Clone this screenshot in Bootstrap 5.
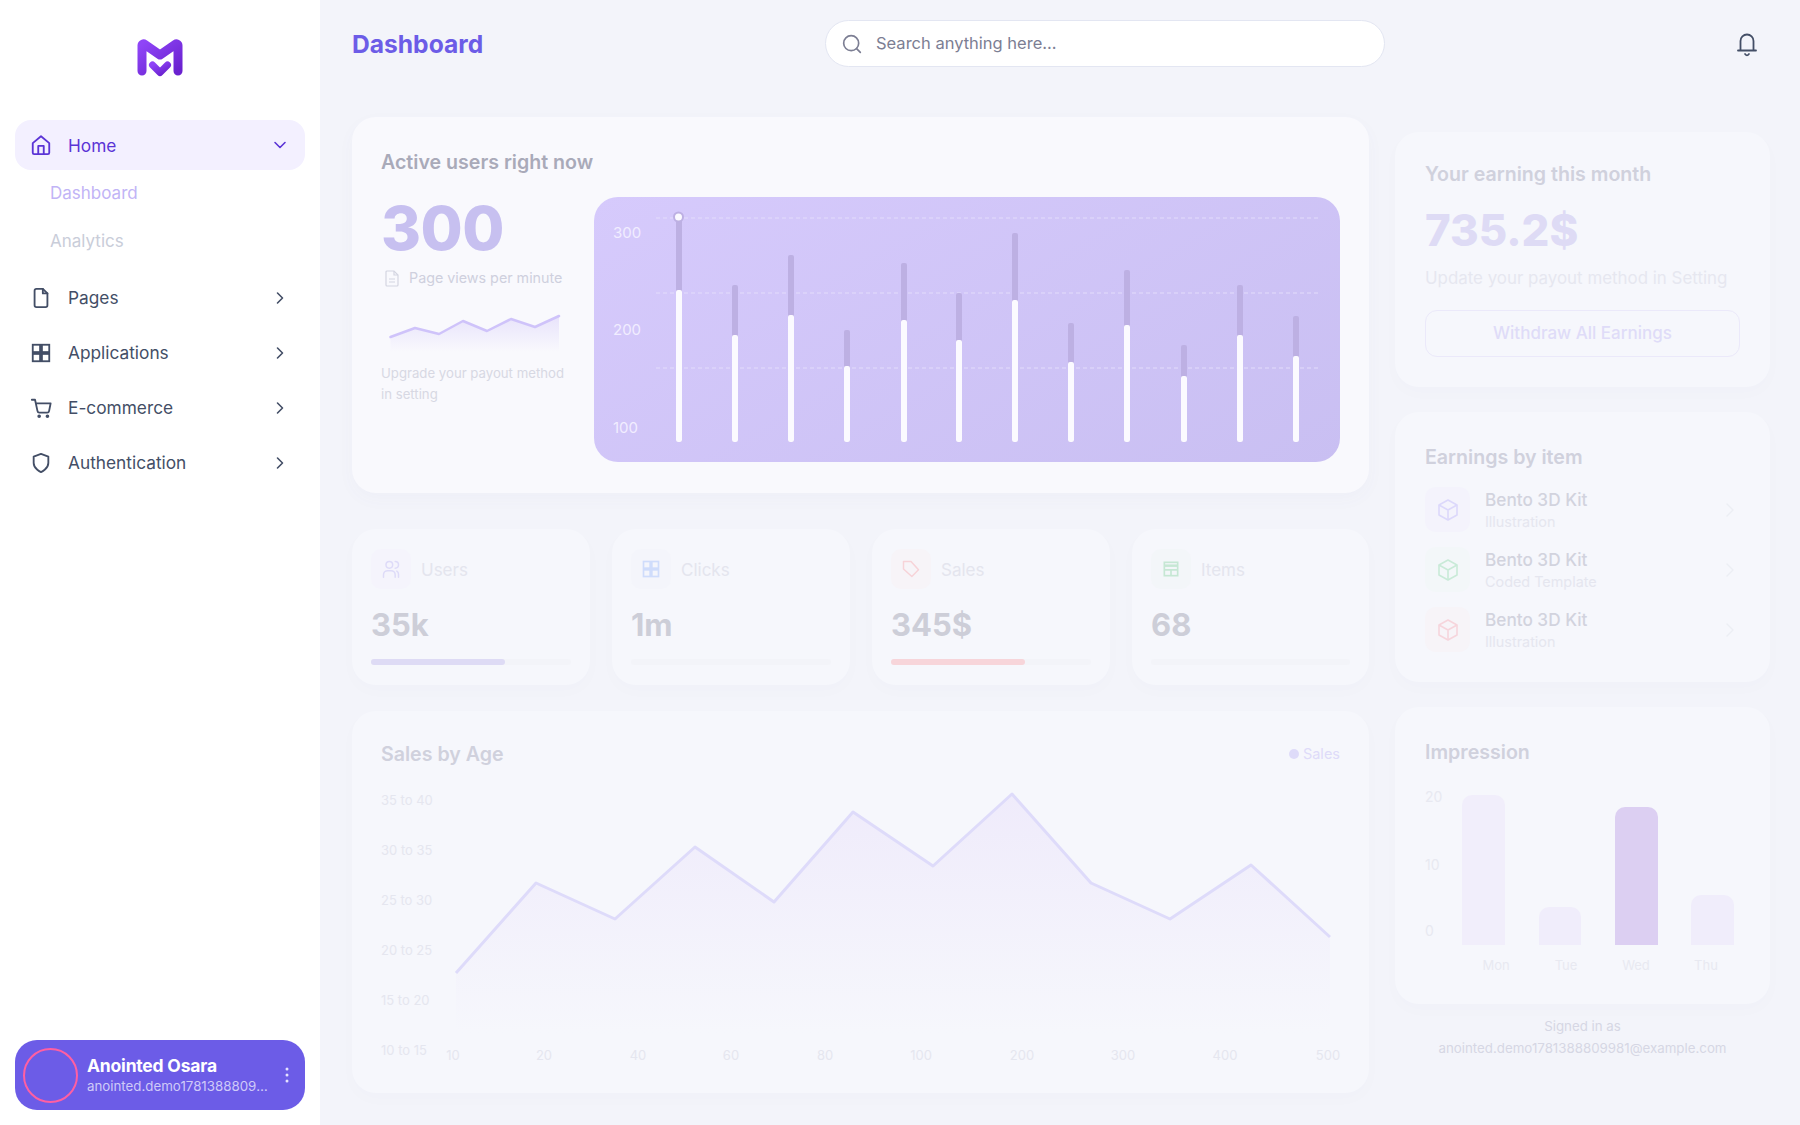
<!DOCTYPE html>
<html lang="en">

<head>
    <meta charset="UTF-8">
    <meta name="viewport" content="width=device-width, initial-scale=1.0">
    <title>Dashboard</title>
    <link href="https://cdn.jsdelivr.net/npm/bootstrap@5.3.0/dist/css/bootstrap.min.css" rel="stylesheet">
    <style>
        body {
            background-color: #f3f4fa;
            font-family: Inter, "Liberation Sans", sans-serif;
            color: #3f4a60;
        }

        svg text {
            font-family: Inter, "Liberation Sans", sans-serif;
        }

        .side-bar {
            width: 320px;
            height: 1125px;
            padding: 39px 15px 15px;
            flex-shrink: 0;
        }

        .side-logo {
            margin-bottom: 43px;
        }

        .side-link {
            height: 55px;
            padding: 0 18px 0 15px;
            font-size: 17.3px;
            color: #434e66;
            border-radius: 16px;
        }

        .side-link span {
            padding-top: 1px;
        }

        .side-link.is-open {
            height: 50px;
            background-color: #f3f0ff;
            color: #5b34d6;
        }

        .side-link svg.lead-icon {
            width: 22px;
            height: 22px;
            margin-right: 16px;
            flex-shrink: 0;
        }

        .side-sub {
            height: 48px;
            padding-left: 35px;
            font-size: 17px;
            color: #c9cdd9;
        }

        .side-sub.is-current {
            color: #c1b4f6;
        }

        .user-box {
            height: 70px;
            padding: 0 16px 0 8px;
            background-color: #6c5ce7;
            border-radius: 22px;
            color: #fff;
        }

        .user-ring {
            width: 55px;
            height: 55px;
            border: 2px solid #ff5fa2;
            border-radius: 50%;
            flex-shrink: 0;
            margin-right: 9px;
        }

        .user-name {
            font-size: 17.5px;
            font-weight: 700;
            line-height: 21px;
            letter-spacing: -.2px;
        }

        .user-mail {
            font-size: 13.3px;
            line-height: 20px;
            color: #cfcaf8;
            width: 181px;
        }

        .page-main {
            padding: 20px 30px 0 32px;
            width: 1480px;
        }

        .top-title {
            width: 473px;
            font-size: 24.6px;
            line-height: 34px;
            padding-top: 1px;
            font-weight: 700;
            color: #6c5ce7;
            margin: 0;
        }

        .search-box {
            width: 560px;
            height: 47px;
            padding: 0 16px;
            background-color: #fff;
            border: 1px solid #e3e6f2;
            border-radius: 24px;
        }

        .search-box input {
            border: 0;
            outline: 0;
            width: 100%;
            padding-top: 1px;
            font-size: 16.5px;
            font-family: inherit;
            background: transparent;
        }

        .search-box input::placeholder {
            color: #7c7e93;
            opacity: 1;
        }

        .bell-icon {
            margin-right: 11px;
        }

        .main-grid {
            display: grid;
            grid-template-columns: 1017px 375px;
            column-gap: 26px;
            margin-top: 50px;
        }

        .tile-card {
            background-color: #f6f7fc;
            border-radius: 24px;
            box-shadow: 0 6px 18px rgba(90, 90, 150, .015);
        }

        .active-card {
            height: 376px;
            padding: 32px 29px;
            background-color: #f9f9fd;
            box-shadow: 0 6px 18px rgba(90, 90, 150, .03);
            margin-bottom: 36px;
        }

        .card-head {
            font-size: 19.6px;
            line-height: 26px;
            font-weight: 600;
            margin: 0;
            color: #d0d1dd;
        }

        .active-card .card-head {
            color: #a9aab9;
            margin-bottom: 22px;
        }

        .big-count {
            font-size: 61px;
            line-height: 62px;
            font-weight: 800;
            color: #c7c0f0;
            letter-spacing: -.5px;
        }

        .views-note {
            margin-top: 8px;
            height: 22px;
            font-size: 14.3px;
            color: #cfd0de;
        }

        .views-note span {
            margin-left: 2px;
        }

        .spark-line {
            display: block;
            margin-top: 22px;
        }

        .upgrade-note {
            width: 190px;
            margin-top: 8px;
            font-size: 13.2px;
            line-height: 21px;
            color: #d7d8e3;
        }

        .users-chart {
            width: 746px;
            height: 265px;
            border-radius: 24px;
            flex-shrink: 0;
            margin-left: auto;
            background: linear-gradient(150deg, #d6cafc, #c9bff2);
            display: block;
        }

        .stat-row {
            display: grid;
            grid-template-columns: 238px 238px 238px 237px;
            column-gap: 22px;
            margin-bottom: 26px;
        }

        .stat-card {
            height: 156px;
            padding: 20px 19px;
        }

        .stat-icon {
            width: 40px;
            height: 40px;
            border-radius: 10px;
            margin-right: 10px;
        }

        .stat-label {
            font-size: 17px;
            padding-top: 4px;
            color: #e4e5ee;
        }

        .stat-num {
            font-size: 31px;
            line-height: 38px;
            font-weight: 700;
            color: #cdced8;
            margin-top: 17px;
            margin-bottom: 15px;
        }

        .stat-track {
            height: 6px;
            background-color: #f3f4f9;
            border-radius: 3px;
        }

        .sales-card {
            height: 382px;
            padding: 30px 29px;
        }

        .sales-card svg {
            display: block;
            margin-top: 23px;
        }

        .legend-note {
            font-size: 14.5px;
            color: #dedbf9;
        }

        .legend-dot {
            width: 10px;
            height: 10px;
            border-radius: 50%;
            background-color: #dedbf9;
            margin-right: 4px;
        }

        .right-col {
            padding-top: 15px;
        }

        .earn-card {
            height: 255px;
            padding: 29px 30px;
            margin-bottom: 25px;
        }

        .earn-sum {
            font-size: 43.7px;
            line-height: 56px;
            font-weight: 800;
            color: #dedbf5;
            margin-top: 16px;
        }

        .earn-note {
            font-size: 16.9px;
            line-height: 24px;
            color: #e6e7f0;
            margin-top: 7px;
            white-space: nowrap;
        }

        .earn-btn {
            display: block;
            width: 315px;
            height: 47px;
            margin-top: 20px;
            font-size: 17px;
            font-weight: 500;
            color: #dfdcf8;
            background: transparent;
            border: 1px solid #ebe9fa;
            border-radius: 12px;
        }

        .items-card {
            height: 270px;
            padding: 32px 30px;
            margin-bottom: 25px;
        }

        .item-row {
            height: 45px;
            margin-top: 15px;
        }

        .items-card .card-head {
            margin-bottom: 17px;
        }

        .item-pic {
            width: 45px;
            height: 45px;
            border-radius: 11px;
            margin-right: 15px;
        }

        .item-name {
            font-size: 17.2px;
            line-height: 22px;
            padding-top: 1px;
            font-weight: 500;
            color: #d2d3de;
        }

        .item-kind {
            font-size: 14.4px;
            line-height: 20px;
            margin-top: 1px;
            color: #e5e6ef;
        }

        .impr-card {
            height: 297px;
            padding: 32px 30px;
        }

        .impr-card svg {
            display: block;
            margin-top: 20px;
        }

        .signed-note {
            margin-top: 11px;
            font-size: 13.3px;
            line-height: 22px;
            color: #d6d7e4;
        }
    </style>
</head>

<body>
    <div class="d-flex">

        <aside class="side-bar bg-white d-flex flex-column">
            <div class="side-logo text-center">
                <svg width="46" height="38" viewBox="0 0 46 38" fill="none">
                    <defs>
                        <linearGradient id="logoFill" x1="0" y1="0" x2="1" y2="1">
                            <stop offset="0" stop-color="#8f45f7" />
                            <stop offset="1" stop-color="#6a22cf" />
                        </linearGradient>
                    </defs>
                    <path d="M5 32V6.5C5 5 6.5 4.5 7.5 5.2L23 16L38.5 5.2C39.5 4.5 41 5 41 6.5V32" stroke="url(#logoFill)" stroke-width="9" stroke-linecap="round" stroke-linejoin="round" />
                    <path d="M15.5 26L23 33.5L30.5 26" stroke="url(#logoFill)" stroke-width="7" stroke-linecap="round" stroke-linejoin="round" />
                </svg>
            </div>

            <nav class="nav flex-column">
                <a class="side-link is-open d-flex align-items-center text-decoration-none" href="#">
                    <svg class="lead-icon" viewBox="0 0 24 24" fill="none" stroke="currentColor" stroke-width="2" stroke-linecap="round" stroke-linejoin="round"><path d="M3 10l9-7.500 9 7.500v10.500a1.500 1.500 0 0 1-1.500 1.500H4.500A1.500 1.500 0 0 1 3 20.500z" /><path d="M9 22v-9h6v9" /></svg>
                    <span class="flex-grow-1">Home</span>
                    <svg width="14" height="14" viewBox="0 0 14 14" fill="none" stroke="currentColor" stroke-width="1.600" stroke-linecap="round" stroke-linejoin="round"><path d="M2 4.500l5 5 5-5" /></svg>
                </a>
                <a class="side-sub is-current d-flex align-items-center text-decoration-none" href="#">Dashboard</a>
                <a class="side-sub d-flex align-items-center text-decoration-none" href="#">Analytics</a>
                <a class="side-link d-flex align-items-center text-decoration-none mt-1" href="#">
                    <svg class="lead-icon" viewBox="0 0 24 24" fill="none" stroke="currentColor" stroke-width="2" stroke-linecap="round" stroke-linejoin="round"><path d="M14 2H7a2 2 0 0 0-2 2v16a2 2 0 0 0 2 2h10a2 2 0 0 0 2-2V7z" /><path d="M14 2v5h5" /></svg>
                    <span class="flex-grow-1">Pages</span>
                    <svg width="14" height="14" viewBox="0 0 14 14" fill="none" stroke="currentColor" stroke-width="1.600" stroke-linecap="round" stroke-linejoin="round"><path d="M4.500 2l5 5-5 5" /></svg>
                </a>
                <a class="side-link d-flex align-items-center text-decoration-none" href="#">
                    <svg class="lead-icon" viewBox="0 0 24 24" fill="none" stroke="currentColor" stroke-width="2"><rect x="3" y="3" width="8" height="8" /><rect x="13" y="3" width="8" height="8" /><rect x="3" y="13" width="8" height="8" /><rect x="13" y="13" width="8" height="8" /></svg>
                    <span class="flex-grow-1">Applications</span>
                    <svg width="14" height="14" viewBox="0 0 14 14" fill="none" stroke="currentColor" stroke-width="1.600" stroke-linecap="round" stroke-linejoin="round"><path d="M4.500 2l5 5-5 5" /></svg>
                </a>
                <a class="side-link d-flex align-items-center text-decoration-none" href="#">
                    <svg class="lead-icon" viewBox="0 0 24 24" fill="none" stroke="currentColor" stroke-width="2" stroke-linecap="round" stroke-linejoin="round"><circle cx="10" cy="21" r="1" /><circle cx="19" cy="21" r="1" /><path d="M2 3h3.500l2.700 12.400a2 2 0 0 0 2 1.600h8.600a2 2 0 0 0 2-1.600L22.500 7H6.500" /></svg>
                    <span class="flex-grow-1">E-commerce</span>
                    <svg width="14" height="14" viewBox="0 0 14 14" fill="none" stroke="currentColor" stroke-width="1.600" stroke-linecap="round" stroke-linejoin="round"><path d="M4.500 2l5 5-5 5" /></svg>
                </a>
                <a class="side-link d-flex align-items-center text-decoration-none" href="#">
                    <svg class="lead-icon" viewBox="0 0 24 24" fill="none" stroke="currentColor" stroke-width="2" stroke-linecap="round" stroke-linejoin="round"><path d="M12 22s8-3.500 8-10V5l-8-3-8 3v7c0 6.500 8 10 8 10z" /></svg>
                    <span class="flex-grow-1">Authentication</span>
                    <svg width="14" height="14" viewBox="0 0 14 14" fill="none" stroke="currentColor" stroke-width="1.600" stroke-linecap="round" stroke-linejoin="round"><path d="M4.500 2l5 5-5 5" /></svg>
                </a>
            </nav>

            <div class="user-box d-flex align-items-center mt-auto">
                <div class="user-ring"></div>
                <div class="flex-grow-1">
                    <div class="user-name">Anointed Osara</div>
                    <div class="user-mail text-truncate">anointed.demo1781388809981@example.com</div>
                </div>
                <svg width="4" height="16" viewBox="0 0 4 16" fill="#e6e2ff"><circle cx="2" cy="2" r="1.500" /><circle cx="2" cy="8" r="1.500" /><circle cx="2" cy="14" r="1.500" /></svg>
            </div>
        </aside>

        <main class="page-main">
            <header class="d-flex align-items-center">
                <h1 class="top-title">Dashboard</h1>
                <div class="search-box d-flex align-items-center gap-2">
                    <svg width="20" height="20" viewBox="0 0 24 24" fill="none" stroke="#7c7e93" stroke-width="2" stroke-linecap="round" class="flex-shrink-0 me-1"><circle cx="11" cy="11" r="9" /><path d="M22 22l-4.500-4.500" /></svg>
                    <input type="text" placeholder="Search anything here...">
                </div>
                <svg class="bell-icon ms-auto" width="24" height="26" viewBox="0 0 24 26" fill="none" stroke="#434e66" stroke-width="1.800" stroke-linecap="round" stroke-linejoin="round"><path d="M5.500 19V10a6.500 6.500 0 0 1 13 0v9" /><path d="M3 19.500h18" /><path d="M10 23a2.200 2.200 0 0 0 4 0" /></svg>
            </header>

            <div class="main-grid">
                <div>
                    <section class="tile-card active-card">
                        <h2 class="card-head">Active users right now</h2>
                        <div class="d-flex">
                            <div>
                                <div class="big-count">300</div>
                                <div class="views-note d-flex align-items-center">
                                    <svg class="me-2 ms-1" width="14" height="17" viewBox="0 0 14 17" fill="none" stroke="#d4d5e1" stroke-width="1.200"><path d="M9 1H2a1 1 0 0 0-1 1v13a1 1 0 0 0 1 1h10a1 1 0 0 0 1-1V5z" /><path d="M9 1v4h4M4 9h6M4 12h6" /></svg>
                                    <span>Page views per minute</span>
                                </div>
                                <svg class="spark-line" width="184" height="44" viewBox="381 312 184 44">
                                    <defs>
                                        <linearGradient id="sparkFill" x1="0" y1="0" x2="0" y2="1">
                                            <stop offset="0" stop-color="#e8e3fb" />
                                            <stop offset="1" stop-color="#f9f9fd" />
                                        </linearGradient>
                                    </defs>
                                    <path d="M390.500 338L415 329L439 335L463 322L487 332L511 320L535 328L559 317V353H390.500Z" fill="url(#sparkFill)" />
                                    <path d="M390.500 338L415 329L439 335L463 322L487 332L511 320L535 328L559 317" fill="none" stroke="#cfc3fa" stroke-width="2.500" stroke-linecap="round" stroke-linejoin="round" />
                                </svg>
                                <div class="upgrade-note">Upgrade your payout method in setting</div>
                            </div>
                            <svg class="users-chart" viewBox="594 197 746 265">
                                <g stroke="#e3dcfb" stroke-width="1" stroke-dasharray="4 3">
                                    <path d="M656 218H1320M656 293H1320M656 368H1320" />
                                </g>
                                <g fill="#f1edff" font-size="15">
                                    <text x="613" y="238">300</text>
                                    <text x="613" y="335">200</text>
                                    <text x="613" y="433">100</text>
                                </g>
                                <g fill="#bdb0e3">
                                    <rect x="676" y="218" width="6" height="224" rx="2" />
                                    <rect x="732" y="285" width="6" height="157" rx="2" />
                                    <rect x="788" y="255" width="6" height="187" rx="2" />
                                    <rect x="844" y="330" width="6" height="112" rx="2" />
                                    <rect x="901" y="263" width="6" height="179" rx="2" />
                                    <rect x="956" y="293" width="6" height="149" rx="2" />
                                    <rect x="1012" y="233" width="6" height="209" rx="2" />
                                    <rect x="1068" y="323" width="6" height="119" rx="2" />
                                    <rect x="1124" y="270" width="6" height="172" rx="2" />
                                    <rect x="1181" y="345" width="6" height="97" rx="2" />
                                    <rect x="1237" y="285" width="6" height="157" rx="2" />
                                    <rect x="1293" y="316" width="6" height="126" rx="2" />
                                </g>
                                <g fill="#fbfaff">
                                    <rect x="676" y="290" width="6" height="152" rx="2" />
                                    <rect x="732" y="335" width="6" height="107" rx="2" />
                                    <rect x="788" y="315" width="6" height="127" rx="2" />
                                    <rect x="844" y="366" width="6" height="76" rx="2" />
                                    <rect x="901" y="320" width="6" height="122" rx="2" />
                                    <rect x="956" y="340" width="6" height="102" rx="2" />
                                    <rect x="1012" y="300" width="6" height="142" rx="2" />
                                    <rect x="1068" y="362" width="6" height="80" rx="2" />
                                    <rect x="1124" y="325" width="6" height="117" rx="2" />
                                    <rect x="1181" y="376" width="6" height="66" rx="2" />
                                    <rect x="1237" y="335" width="6" height="107" rx="2" />
                                    <rect x="1293" y="356" width="6" height="86" rx="2" />
                                </g>
                                <circle cx="678.500" cy="217" r="4.500" fill="#fbfaff" stroke="#bdb0e3" stroke-width="2" />
                            </svg>
                        </div>
                    </section>

                    <div class="stat-row">
                        <section class="tile-card stat-card">
                            <div class="d-flex align-items-center">
                                <div class="stat-icon d-flex align-items-center justify-content-center" style="background-color: #f5f4fc">
                                    <svg width="20" height="20" viewBox="0 0 24 24" fill="none" stroke="#dedbf8" stroke-width="1.800" stroke-linecap="round"><circle cx="10" cy="7" r="4" /><path d="M3 22v-3a5 5 0 0 1 5-5h4a5 5 0 0 1 5 5v3M17 3a4 4 0 0 1 0 8M21 22v-4a4 4 0 0 0-2-3.500" /></svg>
                                </div>
                                <span class="stat-label">Users</span>
                            </div>
                            <div class="stat-num">35k</div>
                            <div class="stat-track">
                                <div class="h-100 rounded-1" style="width: 67%; background-color: #dedbf5"></div>
                            </div>
                        </section>
                        <section class="tile-card stat-card">
                            <div class="d-flex align-items-center">
                                <div class="stat-icon d-flex align-items-center justify-content-center" style="background-color: #f4f5fb">
                                    <svg width="20" height="20" viewBox="0 0 24 24" fill="none" stroke="#cfdcfb" stroke-width="2"><rect x="3" y="3" width="8" height="8" /><rect x="13" y="3" width="8" height="8" /><rect x="3" y="13" width="8" height="8" /><rect x="13" y="13" width="8" height="8" /></svg>
                                </div>
                                <span class="stat-label">Clicks</span>
                            </div>
                            <div class="stat-num">1m</div>
                            <div class="stat-track"></div>
                        </section>
                        <section class="tile-card stat-card">
                            <div class="d-flex align-items-center">
                                <div class="stat-icon d-flex align-items-center justify-content-center" style="background-color: #f7f4f8">
                                    <svg width="20" height="20" viewBox="0 0 24 24" fill="none" stroke="#f7d3d8" stroke-width="1.800" stroke-linejoin="round"><path d="M3 3h9l9 10-8 8-10-9z" /></svg>
                                </div>
                                <span class="stat-label">Sales</span>
                            </div>
                            <div class="stat-num">345$</div>
                            <div class="stat-track">
                                <div class="h-100 rounded-1" style="width: 67%; background-color: #f7d5da"></div>
                            </div>
                        </section>
                        <section class="tile-card stat-card">
                            <div class="d-flex align-items-center">
                                <div class="stat-icon d-flex align-items-center justify-content-center" style="background-color: #f3f6f9">
                                    <svg width="20" height="20" viewBox="0 0 24 24" fill="none" stroke="#c6e7d4" stroke-width="2"><rect x="4" y="4" width="16" height="16" /><path d="M4 8h16" stroke-width="3" /><path d="M4 13h16M12 13v7" /></svg>
                                </div>
                                <span class="stat-label">Items</span>
                            </div>
                            <div class="stat-num">68</div>
                            <div class="stat-track"></div>
                        </section>
                    </div>

                    <section class="tile-card sales-card">
                        <div class="d-flex justify-content-between align-items-center">
                            <h2 class="card-head">Sales by Age</h2>
                            <div class="legend-note d-flex align-items-center"><span class="legend-dot"></span>Sales</div>
                        </div>
                        <svg width="960" height="280" viewBox="381 790 960 280">
                            <defs>
                                <linearGradient id="salesFill" x1="0" y1="0" x2="0" y2="1">
                                    <stop offset="0" stop-color="#efebfb" />
                                    <stop offset="1" stop-color="#f6f7fc" />
                                </linearGradient>
                            </defs>
                            <path d="M456 973L536 883L615 919L695 847L774 902L853 812L933 866L1012 794L1091 883L1170 919L1251 865L1330 937V1033H456Z" fill="url(#salesFill)" />
                            <path d="M456 973L536 883L615 919L695 847L774 902L853 812L933 866L1012 794L1091 883L1170 919L1251 865L1330 937" fill="none" stroke="#dedbfa" stroke-width="3" stroke-linejoin="round" />
                            <g fill="#e5e6ef" font-size="13">
                                <text x="381" y="805">35 to 40</text>
                                <text x="381" y="855">30 to 35</text>
                                <text x="381" y="905">25 to 30</text>
                                <text x="381" y="955">20 to 25</text>
                                <text x="381" y="1005">15 to 20</text>
                                <text x="381" y="1055">10 to 15</text>
                            </g>
                            <g fill="#e5e6ef" font-size="13" text-anchor="middle">
                                <text x="453" y="1060">10</text>
                                <text x="544" y="1060">20</text>
                                <text x="638" y="1060">40</text>
                                <text x="731" y="1060">60</text>
                                <text x="825" y="1060">80</text>
                                <text x="921" y="1060">100</text>
                                <text x="1022" y="1060">200</text>
                                <text x="1123" y="1060">300</text>
                                <text x="1225" y="1060">400</text>
                                <text x="1328" y="1060">500</text>
                            </g>
                        </svg>
                    </section>
                </div>

                <div class="right-col">
                    <section class="tile-card earn-card">
                        <h2 class="card-head">Your earning this month</h2>
                        <div class="earn-sum">735.2$</div>
                        <div class="earn-note">Update your payout method in Setting</div>
                        <button class="earn-btn" type="button">Withdraw All Earnings</button>
                    </section>

                    <section class="tile-card items-card">
                        <h2 class="card-head">Earnings by item</h2>
                        <div class="item-row d-flex align-items-center">
                            <div class="item-pic d-flex align-items-center justify-content-center" style="background-color: #f4f3fc">
                                <svg width="24" height="24" viewBox="0 0 24 24" fill="none" stroke="#dcd8fb" stroke-width="1.600" stroke-linejoin="round"><path d="M12 2l9 5v10l-9 5-9-5V7z" /><path d="M3 7l9 5 9-5M12 12v10" /></svg>
                            </div>
                            <div class="flex-grow-1">
                                <div class="item-name">Bento 3D Kit</div>
                                <div class="item-kind">Illustration</div>
                            </div>
                            <svg class="me-1" width="12" height="14" viewBox="0 0 12 14" fill="none" stroke="#eceef4" stroke-width="1.400" stroke-linecap="round" stroke-linejoin="round"><path d="M3 1l6 6-6 6" /></svg>
                        </div>
                        <div class="item-row d-flex align-items-center">
                            <div class="item-pic d-flex align-items-center justify-content-center" style="background-color: #f3f7f9">
                                <svg width="24" height="24" viewBox="0 0 24 24" fill="none" stroke="#c9ead8" stroke-width="1.600" stroke-linejoin="round"><path d="M12 2l9 5v10l-9 5-9-5V7z" /><path d="M3 7l9 5 9-5M12 12v10" /></svg>
                            </div>
                            <div class="flex-grow-1">
                                <div class="item-name">Bento 3D Kit</div>
                                <div class="item-kind">Coded Template</div>
                            </div>
                            <svg class="me-1" width="12" height="14" viewBox="0 0 12 14" fill="none" stroke="#eceef4" stroke-width="1.400" stroke-linecap="round" stroke-linejoin="round"><path d="M3 1l6 6-6 6" /></svg>
                        </div>
                        <div class="item-row d-flex align-items-center">
                            <div class="item-pic d-flex align-items-center justify-content-center" style="background-color: #f7f4f8">
                                <svg width="24" height="24" viewBox="0 0 24 24" fill="none" stroke="#f6d5dc" stroke-width="1.600" stroke-linejoin="round"><path d="M12 2l9 5v10l-9 5-9-5V7z" /><path d="M3 7l9 5 9-5M12 12v10" /></svg>
                            </div>
                            <div class="flex-grow-1">
                                <div class="item-name">Bento 3D Kit</div>
                                <div class="item-kind">Illustration</div>
                            </div>
                            <svg class="me-1" width="12" height="14" viewBox="0 0 12 14" fill="none" stroke="#eceef4" stroke-width="1.400" stroke-linecap="round" stroke-linejoin="round"><path d="M3 1l6 6-6 6" /></svg>
                        </div>
                    </section>

                    <section class="tile-card impr-card">
                        <h2 class="card-head">Impression</h2>
                        <svg width="315" height="195" viewBox="1425 785 315 195">
                            <g fill="#e8e9f1" font-size="14">
                                <text x="1425" y="802">20</text>
                                <text x="1425" y="870">10</text>
                                <text x="1425" y="936">0</text>
                            </g>
                            <path d="M1462 945V805a10 10 0 0 1 10-10h23a10 10 0 0 1 10 10V945Z" fill="#f1eefb" />
                            <path d="M1539 945V917a10 10 0 0 1 10-10h22a10 10 0 0 1 10 10V945Z" fill="#f0edfb" />
                            <path d="M1615 945V817a10 10 0 0 1 10-10h23a10 10 0 0 1 10 10V945Z" fill="#dccff2" />
                            <path d="M1691 945V905a10 10 0 0 1 10-10h23a10 10 0 0 1 10 10V945Z" fill="#f0edfb" />
                            <g fill="#e8e9f1" font-size="13" text-anchor="middle">
                                <text x="1496" y="970">Mon</text>
                                <text x="1566" y="970">Tue</text>
                                <text x="1636" y="970">Wed</text>
                                <text x="1706" y="970">Thu</text>
                            </g>
                        </svg>
                    </section>

                    <div class="signed-note text-center">Signed in as<br>anointed.demo1781388809981@example.com</div>
                </div>
            </div>
        </main>
    </div>
    <script src="https://cdn.jsdelivr.net/npm/bootstrap@5.3.0/dist/js/bootstrap.bundle.min.js"></script>
</body>

</html>
